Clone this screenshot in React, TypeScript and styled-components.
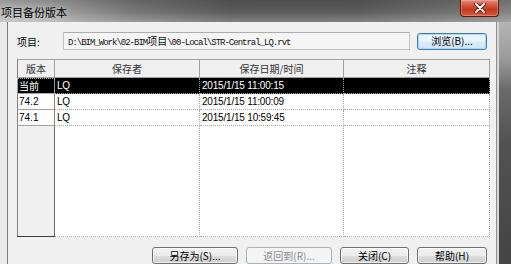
import React from 'react';
import styled, { createGlobalStyle, css } from 'styled-components';

const GlobalStyle = createGlobalStyle`
  html, body {
    margin: 0;
    padding: 0;
    background: #f0f0f0;
  }
  body {
    font-family: "Liberation Sans", "Noto Sans CJK SC", sans-serif;
  }
`;

const cjk = `"Noto Sans CJK SC", "Liberation Sans", sans-serif`;
const latin = `"Liberation Sans", "Noto Sans CJK SC", sans-serif`;

const Window = styled.div`
  width: 511px;
  height: 264px;
  overflow: hidden;
  display: flex;
  flex-direction: column;
`;

const TitleBar = styled.div`
  height: 22px;
  flex: none;
  display: flex;
  align-items: flex-start;
  background:
    linear-gradient(180deg, rgba(0, 0, 0, 0.2) 0%, rgba(0, 0, 0, 0.05) 55%, rgba(255, 255, 255, 0.2) 100%),
    linear-gradient(90deg, #bdbdbd 0%, #acacac 10%, #7f7f7f 26%, #606060 45%, #626262 70%, #7a7a7a 90%, #8c8c8c 100%);
`;

const Title = styled.div`
  flex: 1;
  font-family: ${cjk};
  font-size: 11px;
  line-height: 22px;
  padding: 1px 0 0 1px;
  color: #000;
  text-shadow: 0 0 6px rgba(255, 255, 255, 0.7);
`;

const CloseButton = styled.div`
  width: 39px;
  height: 17px;
  margin-right: 12px;
  box-sizing: border-box;
  border: 1px solid #5e1a0f;
  border-top: none;
  border-radius: 0 0 4px 4px;
  background: linear-gradient(180deg, #e0907c 0%, #d0563c 35%, #c13a20 60%, #d9583a 100%);
  box-shadow: inset 0 0 0 1px rgba(255, 200, 180, 0.35);
  display: flex;
  align-items: center;
  justify-content: center;
`;

const Middle = styled.div`
  flex: 1;
  display: flex;
  min-height: 0;
`;

const LeftFrame = styled.div`
  width: 7px;
  flex: none;
  background: #ebebeb;
`;

const RightFrame = styled.div`
  width: 14px;
  flex: none;
  background:
    linear-gradient(90deg, #d8d8d8 0, #d8d8d8 2px, transparent 2px),
    linear-gradient(180deg, #b4b4b4 0%, #9c9c9c 15%, #6a6a6a 28%, #525252 50%, #444 100%);
`;

const Client = styled.div`
  flex: 1;
  min-width: 0;
  background: #f0f0f0;
  border-left: 1px solid #7e7e7e;
  border-right: 1px solid #8e8e8e;
  padding: 10px 6px 0 9px;
  display: flex;
  flex-direction: column;
`;

const PathRow = styled.div`
  display: flex;
  align-items: center;
  height: 18px;
  padding-right: 3px;
`;

const Label = styled.div`
  width: 46px;
  flex: none;
  font-family: ${cjk};
  font-size: 10px;
  color: #000;
`;

const PathField = styled.div`
  flex: 1;
  height: 18px;
  box-sizing: border-box;
  border: 1px solid #c2c2c2;
  border-top-color: #acacac;
  background: #f5f5f5;
  padding-left: 4px;
  font-family: "Liberation Mono", "Noto Sans CJK SC", monospace;
  font-size: 9px;
  letter-spacing: -1px;
  line-height: 16px;
  color: #111;
  white-space: nowrap;
  overflow: hidden;
`;

const Wide = styled.span`
  font-family: ${cjk};
  font-size: 10px;
  letter-spacing: 0;
`;

const Button = styled.button<{ $width: number; $focused?: boolean }>`
  width: ${(p) => p.$width}px;
  height: 17px;
  flex: none;
  box-sizing: border-box;
  padding: 0;
  border: 1px solid #707070;
  border-radius: 3px;
  font-family: ${cjk};
  font-size: 10px;
  line-height: 14px;
  color: #000;
  background: linear-gradient(180deg, #f2f2f2 0%, #ebebeb 50%, #dddddd 51%, #cfcfcf 100%);
  box-shadow: inset 0 0 0 1px rgba(255, 255, 255, 0.7);

  ${(p) =>
    p.$focused &&
    css`
      border-color: #3c7fb1;
      background: linear-gradient(180deg, #f0f7fc 0%, #e6f2fa 50%, #d8ebf8 51%, #cfe6f7 100%);
      box-shadow: inset 0 0 0 1px #a8d8f4;
    `}

  &:disabled {
    border-color: #adb2b5;
    background: #f4f4f4;
    color: #8b8b8b;
    box-shadow: none;
  }
`;

const BrowseButton = styled(Button)`
  margin-left: 7px;
`;

const Table = styled.div`
  margin-top: 9px;
  height: 178px;
  width: 473px;
  flex: none;
  display: flex;
  flex-direction: column;
  background: #fff;
`;

const gridCols = css`
  display: grid;
  grid-template-columns: 38px 145px 144px 146px;
`;

const HeaderRow = styled.div`
  ${gridCols}
  height: 19px;
  flex: none;
`;

const HeadCell = styled.div<{ $first?: boolean }>`
  box-sizing: border-box;
  border-top: 1px solid #a0a0a0;
  border-bottom: 1px solid #a0a0a0;
  border-right: 1px solid #a0a0a0;
  border-left: ${(p) => (p.$first ? '1px solid #828282' : 'none')};
  background: #f0f0f0;
  font-family: ${cjk};
  font-size: 10px;
  line-height: 17px;
  color: #333;
  text-align: center;
`;

const DataRow = styled.div<{ $selected?: boolean }>`
  ${gridCols}
  height: 16px;
  flex: none;
  background: ${(p) => (p.$selected ? '#000' : '#fff')};
  color: ${(p) => (p.$selected ? '#fff' : '#000')};
`;

const VersionCell = styled.div<{ $selected?: boolean }>`
  box-sizing: border-box;
  border-left: 1px solid #828282;
  border-right: 1px solid #828282;
  border-bottom: 1px solid #a0a0a0;
  padding-left: 1px;
  font-family: ${latin};
  font-size: 10px;
  line-height: 15px;
  white-space: nowrap;
  ${(p) =>
    p.$selected &&
    css`
      font-family: ${cjk};
      outline: 1px dotted #b0b0b0;
      outline-offset: -1px;
    `}
`;

const Cell = styled.div`
  box-sizing: border-box;
  border-right: 1px dotted #a8a8a8;
  border-bottom: 1px dotted #a8a8a8;
  padding-left: 2px;
  font-family: ${latin};
  font-size: 10px;
  letter-spacing: -0.2px;
  line-height: 15px;
  white-space: nowrap;
  overflow: hidden;
`;

const FillerRow = styled.div`
  ${gridCols}
  flex: 1;
`;

const FillerVersion = styled.div`
  background: #f0f0f0;
  border-left: 1px solid #828282;
  border-right: 1px solid #6a6a6a;
  border-bottom: 1px solid #3c3c3c;
`;

const FillerCell = styled.div`
  background: #fff;
  border-right: 1px dotted #a8a8a8;
  border-bottom: 1px dotted #a8a8a8;
`;

const ButtonRow = styled.div`
  margin-top: 10px;
  display: flex;
  justify-content: flex-end;
  gap: 8px;
  padding-right: 3px;
`;

const versions = [
  { version: '当前', user: 'LQ', date: '2015/1/15 11:00:15', note: '' },
  { version: '74.2', user: 'LQ', date: '2015/1/15 11:00:09', note: '' },
  { version: '74.1', user: 'LQ', date: '2015/1/15 10:59:45', note: '' },
];

const CloseIcon = () => (
  <svg width="12" height="10" viewBox="0 0 12 10">
    <path d="M2 1 L10 9 M10 1 L2 9" stroke="#4a1208" strokeWidth="3.6" strokeLinecap="round" />
    <path d="M2 1 L10 9 M10 1 L2 9" stroke="#fff" strokeWidth="2" strokeLinecap="round" />
  </svg>
);

const App: React.FC = () => {
  return (
    <>
      <GlobalStyle />
      <Window>
        <TitleBar>
          <Title>项目备份版本</Title>
          <CloseButton>
            <CloseIcon />
          </CloseButton>
        </TitleBar>
        <Middle>
          <LeftFrame />
          <Client>
            <PathRow>
              <Label>项目:</Label>
              <PathField>
                D:\BIM_Work\02-BIM<Wide>项目</Wide>\00-Local\STR-Central_LQ.rvt
              </PathField>
              <BrowseButton $width={70} $focused>
                浏览(B)...
              </BrowseButton>
            </PathRow>
            <Table>
              <HeaderRow>
                <HeadCell $first>版本</HeadCell>
                <HeadCell>保存者</HeadCell>
                <HeadCell>保存日期/时间</HeadCell>
                <HeadCell>注释</HeadCell>
              </HeaderRow>
              {versions.map((v, i) => (
                <DataRow key={v.version} $selected={i === 0}>
                  <VersionCell $selected={i === 0}>{v.version}</VersionCell>
                  <Cell>{v.user}</Cell>
                  <Cell>{v.date}</Cell>
                  <Cell>{v.note}</Cell>
                </DataRow>
              ))}
              <FillerRow>
                <FillerVersion />
                <FillerCell />
                <FillerCell />
                <FillerCell />
              </FillerRow>
            </Table>
            <ButtonRow>
              <Button $width={86}>另存为(S)...</Button>
              <Button $width={86} disabled>
                返回到(R)...
              </Button>
              <Button $width={69}>关闭(C)</Button>
              <Button $width={70}>帮助(H)</Button>
            </ButtonRow>
          </Client>
          <RightFrame />
        </Middle>
      </Window>
    </>
  );
};

export default App;
